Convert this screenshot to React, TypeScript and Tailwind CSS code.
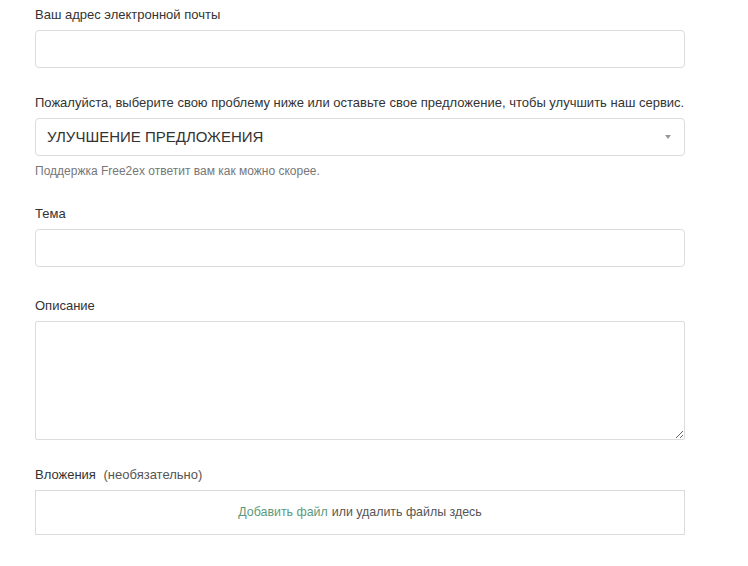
import React from "react";

const inputCls =
  "block w-full h-[38px] rounded-[4px] border border-[#dcdcdc] bg-white px-3 outline-none";

export default function App() {
  return (
    <div
      className="w-[748px] h-[566px] bg-white text-[#333] overflow-hidden"
      style={{ fontFamily: '"Liberation Sans", Arial, sans-serif' }}
    >
      <div className="flex flex-col pl-[35px] pr-[63px] pt-[5px]">
        <label className="text-[13px] leading-[20px] mb-[5px]">Ваш адрес электронной почты</label>
        <input className={inputCls} />

        <label className="text-[13px] leading-[20px] mt-[25px] mb-[5px]">
          Пожалуйста, выберите свою проблему ниже или оставьте свое предложение, чтобы улучшить наш сервис.
        </label>
        <div className="relative flex items-center h-[38px] rounded-[4px] border border-[#dcdcdc] bg-white pl-[11px] pr-3">
          <span className="text-[15px] text-[#333]">УЛУЧШЕНИЕ ПРЕДЛОЖЕНИЯ</span>
          <span className="absolute right-[13px] top-[16px] w-0 h-0 border-l-[3px] border-r-[3px] border-t-[4px] border-l-transparent border-r-transparent border-t-[#999]" />
        </div>
        <p className="text-[12px] leading-[17px] mt-[7px] text-[#777]">
          Поддержка Free2ex ответит вам как можно скорее.
        </p>

        <label className="text-[13px] leading-[20px] mt-[24px] mb-[5px]">Тема</label>
        <input className={inputCls} />

        <label className="text-[13px] leading-[20px] mt-[29px] mb-[5px]">Описание</label>
        <textarea className="block w-full h-[119px] rounded-[2px] border border-[#dcdcdc] bg-white px-3 py-2 outline-none" />

        <label className="text-[13px] leading-[20px] mt-[25px] mb-[5px]">
          Вложения <span className="ml-[4px] text-[#555]">(необязательно)</span>
        </label>
        <div className="flex items-center justify-center h-[45px] border border-[#dcdcdc] bg-white text-[12.4px]">
          <span className="text-[#5b9a7d]">Добавить файл</span>
          <span className="ml-[4px] text-[#555]">или удалить файлы здесь</span>
        </div>
      </div>
    </div>
  );
}
